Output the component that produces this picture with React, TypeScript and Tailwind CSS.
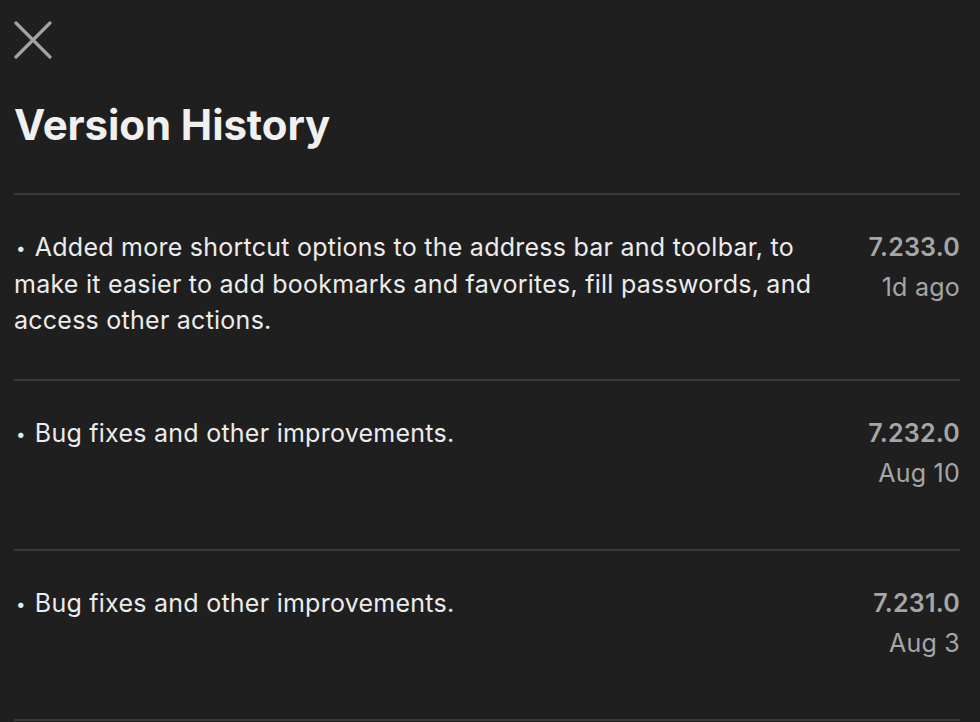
type Entry = {
  notes: string;
  version: string;
  date: string;
  height: string;
};

const entries: Entry[] = [
  {
    notes:
      "Added more shortcut options to the address bar and toolbar, to make it easier to add bookmarks and favorites, fill passwords, and access other actions.",
    version: "7.233.0",
    date: "1d ago",
    height: "h-[186px]",
  },
  {
    notes: "Bug fixes and other improvements.",
    version: "7.232.0",
    date: "Aug 10",
    height: "h-[170px]",
  },
  {
    notes: "Bug fixes and other improvements.",
    version: "7.231.0",
    date: "Aug 3",
    height: "h-[170px]",
  },
];

function CloseIcon() {
  return (
    <svg width="38" height="38" viewBox="0 0 38 38" fill="none">
      <path
        d="M2 2L36 36M36 2L2 36"
        stroke="#a3a3a3"
        strokeWidth="3.2"
        strokeLinecap="round"
      />
    </svg>
  );
}

export default function App() {
  return (
    <div
      className="h-[722px] w-[980px] overflow-hidden bg-[#1f1f1f] pl-[14px] pr-[20px] antialiased"
      style={{ fontFamily: "Inter, 'Noto Sans', sans-serif" }}
    >
      <div className="pt-[21px]">
        <CloseIcon />
      </div>

      <h1 className="mt-[41px] text-[42px] font-bold leading-[50px] tracking-[-0.1px] text-[#f0f0f0]">
        Version History
      </h1>

      <div className="mt-[43px] border-t-2 border-[#3a3a3a]">
        {entries.map((e) => (
          <div
            key={e.version}
            className={`flex justify-between gap-10 border-b-2 border-[#3a3a3a] pt-[34px] ${e.height}`}
          >
            <p className="max-w-[800px] text-[25px] leading-[36px] tracking-[0.25px] text-[#ececec]">
              <span className="mr-[9px] ml-[2px] text-[17px] align-[2px]">•</span>
              {e.notes}
            </p>
            <div className="shrink-0 text-right text-[25px] leading-[40px] tracking-[0.25px] text-[#a6a6a6]">
              <div className="-mt-[2px] font-semibold">{e.version}</div>
              <div>{e.date}</div>
            </div>
          </div>
        ))}
      </div>
    </div>
  );
}
